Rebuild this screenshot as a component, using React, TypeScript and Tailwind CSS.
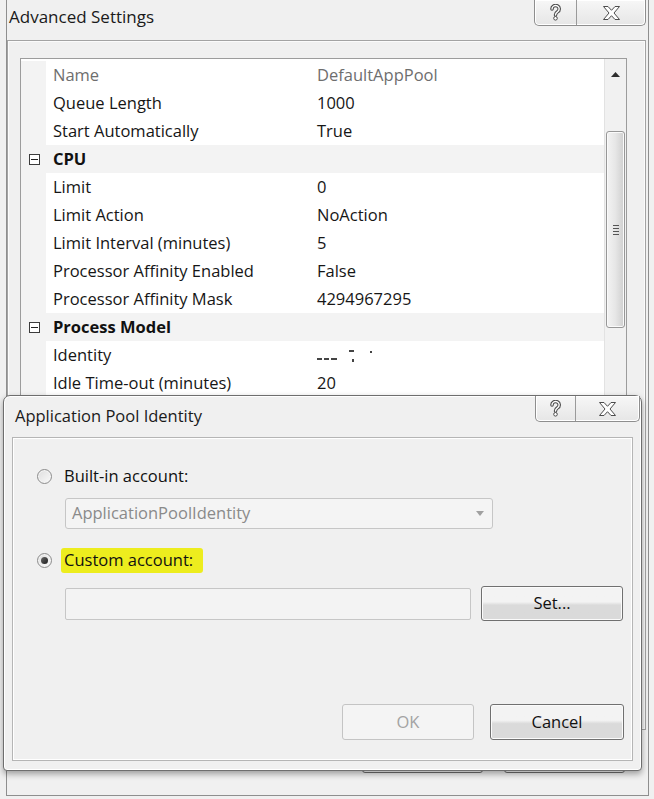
import type { ReactNode } from 'react';

type Row =
  | { kind: 'prop'; name: string; value: ReactNode; dim?: boolean }
  | { kind: 'cat'; name: string };

const rows: Row[] = [
  { kind: 'prop', name: 'Name', value: 'DefaultAppPool', dim: true },
  { kind: 'prop', name: 'Queue Length', value: '1000' },
  { kind: 'prop', name: 'Start Automatically', value: 'True' },
  { kind: 'cat', name: 'CPU' },
  { kind: 'prop', name: 'Limit', value: '0' },
  { kind: 'prop', name: 'Limit Action', value: 'NoAction' },
  { kind: 'prop', name: 'Limit Interval (minutes)', value: '5' },
  { kind: 'prop', name: 'Processor Affinity Enabled', value: 'False' },
  { kind: 'prop', name: 'Processor Affinity Mask', value: '4294967295' },
  { kind: 'cat', name: 'Process Model' },
  {
    kind: 'prop',
    name: 'Identity',
    value: (
      // value is blurred out in the screenshot
      <span className="flex items-center">
        <span className="mt-[8px] h-[2px] w-[5px] bg-[#444]" />
        <span className="ml-[2px] mt-[8px] h-[2px] w-[5px] bg-[#444]" />
        <span className="ml-[2px] mt-[8px] h-[2px] w-[6px] bg-[#444]" />
        <span className="ml-[12px] mb-[8px] h-[2px] w-[5px] bg-[#444]" />
        <span className="ml-[-2px] mt-[10px] h-[3px] w-[2px] bg-[#444]" />
        <span className="ml-[16px] mb-[6px] h-[2px] w-[2px] bg-[#444]" />
      </span>
    ),
  },
  { kind: 'prop', name: 'Idle Time-out (minutes)', value: '20' },
];

function HelpGlyph() {
  return (
    <svg width="13" height="17" viewBox="0 0 13 17">
      <path
        d="M3 5 A3.6 3.4 0 1 1 8.5 7.8 C7.2 8.6 6.5 9.3 6.5 11"
        fill="none"
        stroke="#4c4c4c"
        strokeWidth="3.6"
        strokeLinecap="round"
      />
      <path
        d="M3 5 A3.6 3.4 0 1 1 8.5 7.8 C7.2 8.6 6.5 9.3 6.5 11"
        fill="none"
        stroke="#ffffff"
        strokeWidth="1.4"
        strokeLinecap="round"
      />
      <circle cx="6.5" cy="14.3" r="1.8" fill="#ffffff" stroke="#4c4c4c" strokeWidth="1" />
    </svg>
  );
}

function CloseGlyph() {
  return (
    <svg width="17" height="14" viewBox="0 0 17 14">
      <polygon
        points="0.5,0.5 5,0.5 8.5,4.3 12,0.5 16.5,0.5 11,7 16.5,13.5 12,13.5 8.5,9.7 5,13.5 0.5,13.5 6,7"
        fill="#ffffff"
        stroke="#4c4c4c"
        strokeWidth="1"
        strokeLinejoin="round"
      />
    </svg>
  );
}

function CaptionButtons({ left, right }: { left: string; right: string }) {
  return (
    <div className="flex h-[26px] rounded-b-[5px] border border-t-0 border-[#8e8e8e] bg-gradient-to-b from-[#f7f7f7] to-[#e6e6e6] shadow-[inset_0_0_0_1px_#ffffff]">
      <div className={`flex ${left} items-center justify-center border-r border-[#9a9a9a]`}>
        <HelpGlyph />
      </div>
      <div className={`flex ${right} items-center justify-center`}>
        <CloseGlyph />
      </div>
    </div>
  );
}

function Button({ label, disabled, w, h }: { label?: string; disabled?: boolean; w: string; h: string }) {
  return (
    <div
      className={`flex ${w} ${h} items-center justify-center rounded-[3px] border text-[16.5px] ${
        disabled
          ? 'border-[#c4c4c4] bg-[#f4f4f4] text-[#a3a3a3]'
          : 'border-[#707070] bg-gradient-to-b from-[#f3f3f3] from-45% to-[#dadada] to-55% text-[#111] shadow-[inset_0_0_0_1px_#fbfbfb]'
      }`}
    >
      {label}
    </div>
  );
}

function Radio({ checked }: { checked?: boolean }) {
  return (
    <div className="flex h-[15px] w-[15px] items-center justify-center rounded-full border border-[#8c8c8c] bg-gradient-to-br from-[#dedede] to-[#fafafa] shadow-[inset_0_0_0_1px_#f4f4f4]">
      {checked && (
        <div className="h-[7px] w-[7px] rounded-full bg-gradient-to-br from-[#6a6a6a] to-[#1e1e1e]" />
      )}
    </div>
  );
}

function PropertyGrid() {
  return (
    <div className="flex flex-1 border border-[#9c9c9c] bg-white">
      <div className="flex-1 pt-[2px]">
        {rows.map((row) =>
          row.kind === 'cat' ? (
            <div key={row.name} className="flex h-[28px] items-center bg-[#f3f3f3]">
              <div className="flex w-[25px] justify-center pl-[1px]">
                <div className="flex h-[11px] w-[11px] items-center justify-center border border-[#3c3c3c] bg-white">
                  <div className="h-px w-[7px] bg-[#222]" />
                </div>
              </div>
              <div className="pl-[7px] font-bold text-[#111]">{row.name}</div>
            </div>
          ) : (
            <div key={row.name} className="flex h-[28px] items-center">
              <div className="h-full w-[25px] bg-[#f3f3f3]" />
              <div className={`w-[267px] pl-[7px] ${row.dim ? 'text-[#6e6e6e]' : 'text-[#161616]'}`}>
                {row.name}
              </div>
              <div className={`pl-[4px] ${row.dim ? 'text-[#6e6e6e]' : 'text-[#161616]'}`}>{row.value}</div>
            </div>
          ),
        )}
      </div>
      <div className="flex w-[22px] flex-col border-l border-[#e2e2e2] bg-[#f1f1f1]">
        <div className="flex h-[30px] items-center justify-center">
          <svg width="9" height="5" viewBox="0 0 9 5">
            <polygon points="0,5 4.5,0 9,5" fill="#2e2e2e" />
          </svg>
        </div>
        <div className="mx-[1px] mt-[42px] flex h-[197px] items-center justify-center rounded-[3px] border border-[#979797] bg-gradient-to-r from-[#f3f3f3] via-[#e6e6e6] to-[#cfcfcf] shadow-[inset_0_0_0_1px_#fafafa]">
          <div className="flex flex-col gap-[2px]">
            <div className="h-px w-[6px] bg-[#555]" />
            <div className="h-px w-[6px] bg-[#555]" />
            <div className="h-px w-[6px] bg-[#555]" />
            <div className="h-px w-[6px] bg-[#555]" />
          </div>
        </div>
      </div>
    </div>
  );
}

function IdentityDialog() {
  return (
    <div className="absolute left-[3px] top-[395px] flex h-[376px] w-[639px] flex-col rounded-t-[7px] rounded-b-[4px] border border-[#6e6e6e] bg-[#f0f0f0] shadow-[0_3px_6px_rgba(0,0,0,0.35),inset_0_0_0_1px_#ffffff]">
      <div className="flex h-[41px] items-start justify-between">
        <div className="pl-[11px] pt-[8px] text-[16.5px] text-[#1a1a1a]">Application Pool Identity</div>
        <div className="mr-[1px]">
          <CaptionButtons left="w-[40px]" right="w-[63px]" />
        </div>
      </div>
      <div className="mx-[8px] flex h-[324px] flex-col border border-[#b5b5b5] bg-[#f0f0f0] shadow-[inset_0_0_0_1px_#ffffff]">
        <div className="mt-[26px] flex h-[24px] items-center pl-[24px]">
          <Radio />
          <span className="ml-[12px] text-[16.5px] text-[#111]">Built-in account:</span>
        </div>
        <div className="ml-[52px] mt-[10px] flex h-[31px] w-[428px] items-center justify-between rounded-[3px] border border-[#c6c6c6] bg-[#f4f4f4] pl-[6px] pr-[8px] text-[16.5px] text-[#8a8a8a]">
          <span>ApplicationPoolIdentity</span>
          <svg width="8" height="5" viewBox="0 0 8 5">
            <polygon points="0,0 8,0 4,5" fill="#a0a0a0" />
          </svg>
        </div>
        <div className="mt-[19px] flex h-[25px] items-center pl-[24px]">
          <Radio checked />
          <span className="ml-[9px] rounded-[3px] bg-[#eded1e] pl-[3px] pr-[10px] text-[16.5px] text-[#111]">
            Custom account:
          </span>
        </div>
        <div className="mt-[13px] flex items-center pl-[52px]">
          <div className="h-[32px] w-[406px] rounded-[2px] border border-[#c6c6c6] bg-[#f3f3f3]" />
          <div className="ml-[10px]">
            <Button label="Set..." w="w-[142px]" h="h-[35px]" />
          </div>
        </div>
        <div className="mt-[83px] flex justify-end gap-[16px] pr-[8px]">
          <Button label="OK" disabled w="w-[132px]" h="h-[36px]" />
          <Button label="Cancel" w="w-[134px]" h="h-[36px]" />
        </div>
      </div>
    </div>
  );
}

export default function App() {
  return (
    <div className="relative h-[799px] w-[654px] overflow-hidden bg-[#f0f0f0] font-['Open_Sans','Noto_Sans',sans-serif] text-[16.5px]">
      <div className="ml-[6px] flex h-[796px] w-[643px] flex-col border-x border-b border-[#8e8e8e]">
        <div className="flex h-[40px] items-start justify-between">
          <div className="pl-[2px] pt-[4px] text-[17px] text-[#1a1a1a]">Advanced Settings</div>
          <div className="mr-[2px]">
            <CaptionButtons left="w-[42px]" right="w-[68px]" />
          </div>
        </div>
        <div className="mr-[2px] flex h-[690px] flex-col border border-[#a3a3a3] pb-[20px] pl-[12px] pr-[18px] pt-[17px] shadow-[inset_0_0_0_1px_#fbfbfb]">
          <PropertyGrid />
        </div>
        {/* OK / Cancel of the window behind: only their lower edges show under the dialog */}
        <div className="mt-[9px] flex justify-end gap-[21px] pr-[23px]">
          <Button w="w-[121px]" h="h-[34px]" />
          <Button w="w-[121px]" h="h-[34px]" />
        </div>
      </div>
      <IdentityDialog />
    </div>
  );
}
